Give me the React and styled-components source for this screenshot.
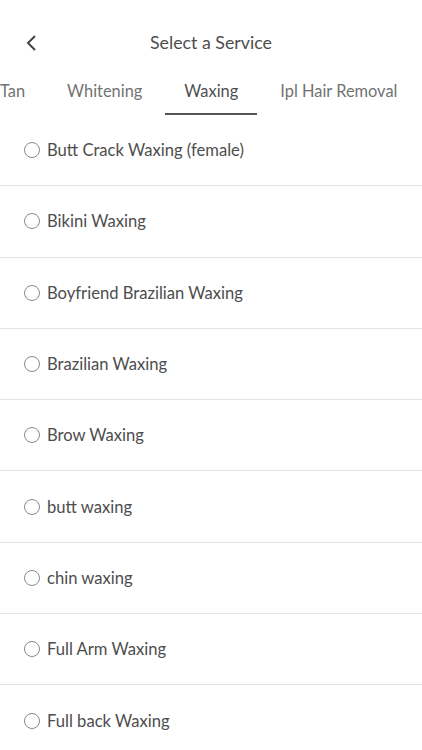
import React, { useState } from 'react'
import styled, { createGlobalStyle } from 'styled-components'

const GlobalStyle = createGlobalStyle`
    body {
        margin: 0;
        background: #fff;
        font-family: Lato, "Open Sans", sans-serif;
    }
`

const Screen = styled.div`
    width: 422px;
    height: 750px;
    overflow: hidden;
    background: #fff;
    display: flex;
    flex-direction: column;
`

const Header = styled.div`
    height: 71px;
    flex-shrink: 0;
    padding-top: 30px;
    box-sizing: border-box;
    display: flex;
    justify-content: center;
    position: relative;
`

const BackButton = styled.button`
    position: absolute;
    left: 20px;
    top: 31px;
    width: 24px;
    height: 24px;
    padding: 0;
    border: none;
    background: none;
    display: flex;
    align-items: center;
    justify-content: center;
`

const Title = styled.h1`
    margin: 0;
    font-size: 17.8px;
    line-height: 24px;
    font-weight: 400;
    color: #4d4d4d;
`

const TabStrip = styled.div`
    display: flex;
    flex-shrink: 0;
    overflow: hidden;
    height: 44px;
    margin-left: -21px;
    white-space: nowrap;
`

const Tab = styled.div`
    padding: 8px 19px 10px;
    margin: 0 2px;
    font-size: 16.4px;
    line-height: 24px;
    color: ${p => (p.$active ? '#4f4f4f' : '#727272')};
    border-bottom: 2px solid ${p => (p.$active ? '#555' : 'transparent')};
    flex-shrink: 0;
`

const List = styled.div`
    display: flex;
    flex-direction: column;
`

const Row = styled.label`
    height: 70.3px;
    display: flex;
    align-items: center;
    gap: 7px;
    padding-left: 24px;
    border-bottom: 1px solid #e4e4e4;
    flex-shrink: 0;
`

const Radio = styled.span`
    width: 14px;
    height: 14px;
    border-radius: 50%;
    border: 1px solid #8a8a8a;
    flex-shrink: 0;
`

const RowText = styled.span`
    font-size: 16.6px;
    color: #4d4d4d;
`

const tabs = ['Tan', 'Whitening', 'Waxing', 'Ipl Hair Removal']

const services = [
    'Butt Crack Waxing (female)',
    'Bikini Waxing',
    'Boyfriend Brazilian Waxing',
    'Brazilian Waxing',
    'Brow Waxing',
    'butt waxing',
    'chin waxing',
    'Full Arm Waxing',
    'Full back Waxing',
]

export default function App() {
    const [active] = useState('Waxing')
    return (
        <Screen>
            <GlobalStyle />
            <Header>
                <BackButton>
                    <svg width="14" height="18" viewBox="0 0 14 18">
                        <polyline points="10,2 3,9 10,16" fill="none" stroke="#444" strokeWidth="2" />
                    </svg>
                </BackButton>
                <Title>Select a Service</Title>
            </Header>
            <TabStrip>
                {tabs.map(t => (
                    <Tab key={t} $active={t === active}>{t}</Tab>
                ))}
            </TabStrip>
            <List>
                {services.map(s => (
                    <Row key={s}>
                        <Radio />
                        <RowText>{s}</RowText>
                    </Row>
                ))}
            </List>
        </Screen>
    )
}
